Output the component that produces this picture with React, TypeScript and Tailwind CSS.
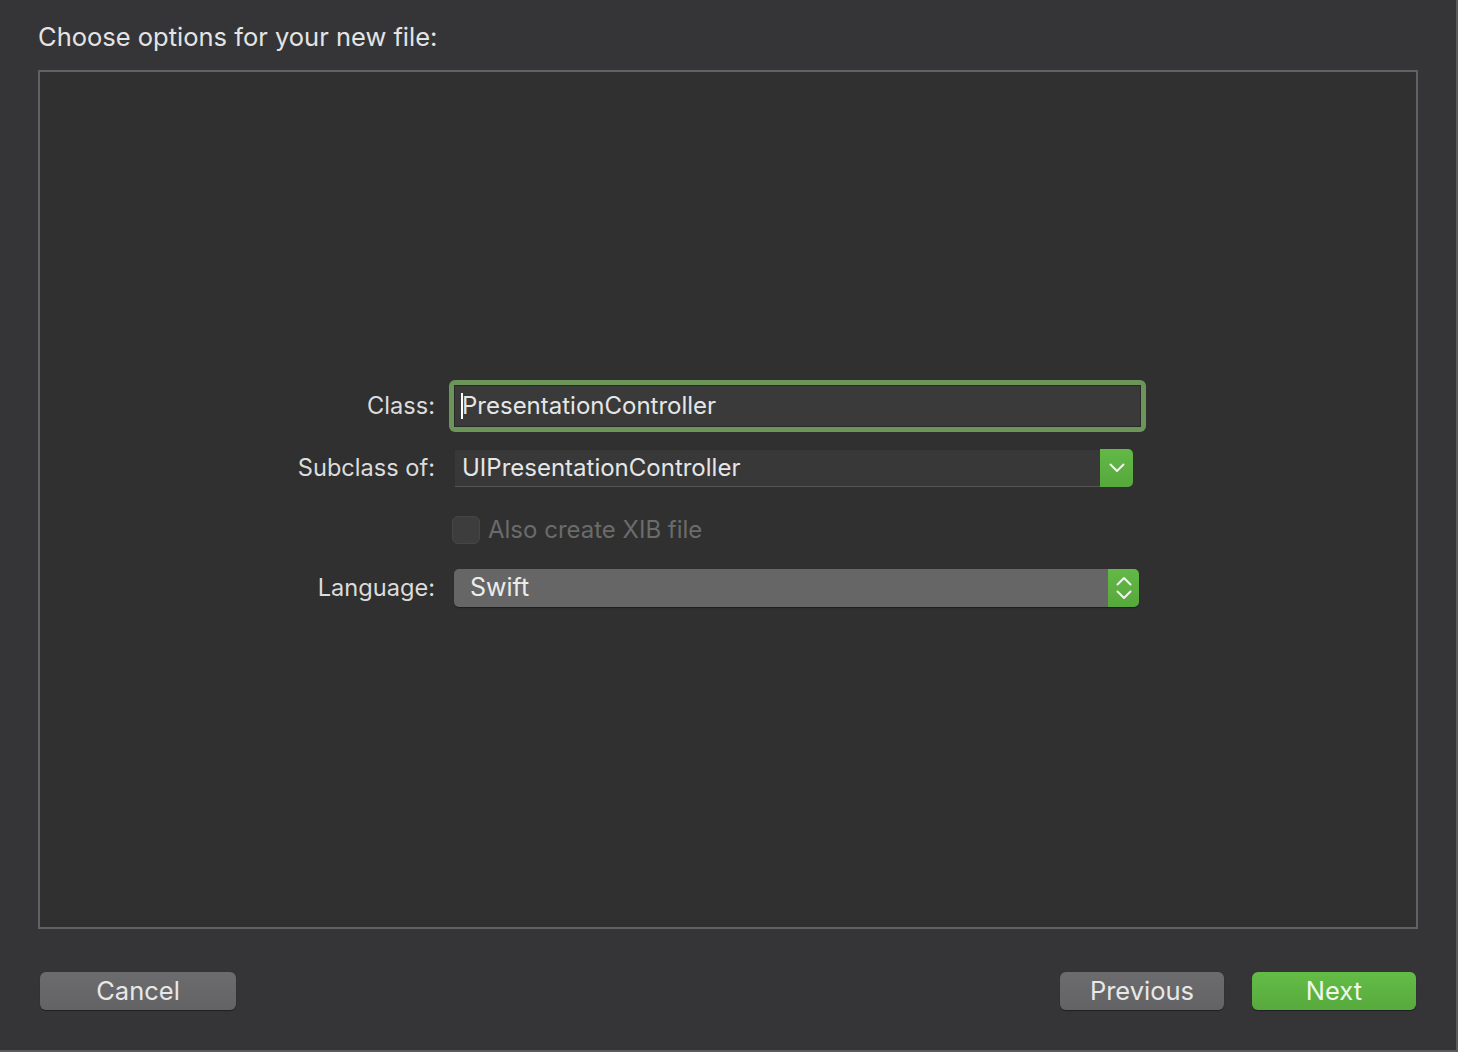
const font = { fontFamily: '"Inter", "Liberation Sans", sans-serif' };

const ChevronDown = () => (
  <svg width="16" height="10" viewBox="0 0 16 10" fill="none">
    <path d="M1.5 1.5 L8 8 L14.5 1.5" stroke="#f2f2f2" strokeWidth="2" strokeLinecap="round" strokeLinejoin="round" />
  </svg>
);

const UpDown = () => (
  <svg width="16" height="26" viewBox="0 0 16 26" fill="none">
    <path d="M1.5 9.5 L8 3 L14.5 9.5" stroke="#f2f2f2" strokeWidth="2" strokeLinecap="round" strokeLinejoin="round" />
    <path d="M1.5 16.5 L8 23 L14.5 16.5" stroke="#f2f2f2" strokeWidth="2" strokeLinecap="round" strokeLinejoin="round" />
  </svg>
);

const Label = ({ children }: { children: React.ReactNode }) => (
  <div className="w-[395px] shrink-0 text-right text-[23.6px] text-[#dcdcdc]">{children}</div>
);

export default function App() {
  return (
    <div
      className="flex h-[1052px] w-[1458px] flex-col border-r-2 border-b-2 border-[#5a5a5c] bg-[#353537] px-[38px] antialiased"
      style={font}
    >
      <h1 className="pt-[22px] pb-[18px] text-[25.5px] leading-[30px] font-normal text-[#e4e4e4]">
        Choose options for your new file:
      </h1>

      {/* Options box */}
      <div className="flex h-[859px] flex-col border-2 border-[#616163] bg-[#303030] pt-[308px]">
        {/* Class */}
        <div className="flex h-[52px] items-center">
          <Label>Class:</Label>
          <div className="ml-[14px] h-[52px] w-[697px] rounded-[6px] bg-[#6b9559] p-[5px]">
            <div className="flex h-full items-center border border-[#2a2a2a] bg-[#3a3a3a] pl-[6px]">
              <span className="h-[26px] w-[2px] bg-white" />
              <span className="-ml-[1px] text-[24px] text-[#e6e6e6]">PresentationController</span>
            </div>
          </div>
        </div>

        {/* Subclass */}
        <div className="mt-[17px] flex h-[38px] items-center">
          <Label>Subclass of:</Label>
          <div className="ml-[20px] flex h-[38px] w-[678px] items-stretch">
            <div className="flex flex-1 items-center border-t border-b border-t-[#2e2e2e] border-b-[#555555] bg-[#383838] pl-[7px] text-[24px] text-[#e6e6e6]">
              UIPresentationController
            </div>
            <div className="flex w-[33px] items-center justify-center rounded-r-[5px] bg-gradient-to-b from-[#63b846] to-[#57a83c]">
              <ChevronDown />
            </div>
          </div>
        </div>

        {/* Checkbox */}
        <div className="mt-[29px] flex h-[28px] items-center">
          <div className="w-[395px] shrink-0" />
          <div className="ml-[17px] h-[28px] w-[28px] rounded-[6px] border border-[#464646] bg-[#3d3d3d]" />
          <span className="ml-[8px] text-[24px] text-[#6b6b6b]">Also create XIB file</span>
        </div>

        {/* Language */}
        <div className="mt-[25px] flex h-[38px] items-center">
          <Label>Language:</Label>
          <div className="ml-[19px] flex h-[38px] w-[685px] items-stretch overflow-hidden rounded-[5px] shadow-[0_1px_1px_rgba(0,0,0,0.4)]">
            <div className="flex flex-1 items-center bg-[#666666] pl-[16px] text-[25px] text-[#ececec]">Swift</div>
            <div className="flex w-[31px] items-center justify-center bg-gradient-to-b from-[#63b846] to-[#57a83c]">
              <UpDown />
            </div>
          </div>
        </div>
      </div>

      {/* Buttons */}
      <div className="mt-[43px] flex items-center px-[2px]">
        <button className="h-[38px] w-[196px] rounded-[6px] bg-gradient-to-b from-[#6c6c6e] to-[#636365] text-[25.5px] text-[#e8e8e8] shadow-[0_1px_1px_rgba(0,0,0,0.4)]">
          Cancel
        </button>
        <div className="flex-1" />
        <button className="h-[38px] w-[164px] rounded-[6px] bg-gradient-to-b from-[#6c6c6e] to-[#636365] text-[25.5px] text-[#e8e8e8] shadow-[0_1px_1px_rgba(0,0,0,0.4)]">
          Previous
        </button>
        <button className="ml-[28px] h-[38px] w-[164px] rounded-[6px] bg-gradient-to-b from-[#64bd47] to-[#57aa3d] text-[25.5px] text-[#eef7ea] shadow-[0_1px_1px_rgba(0,0,0,0.4)]">
          Next
        </button>
      </div>
    </div>
  );
}
